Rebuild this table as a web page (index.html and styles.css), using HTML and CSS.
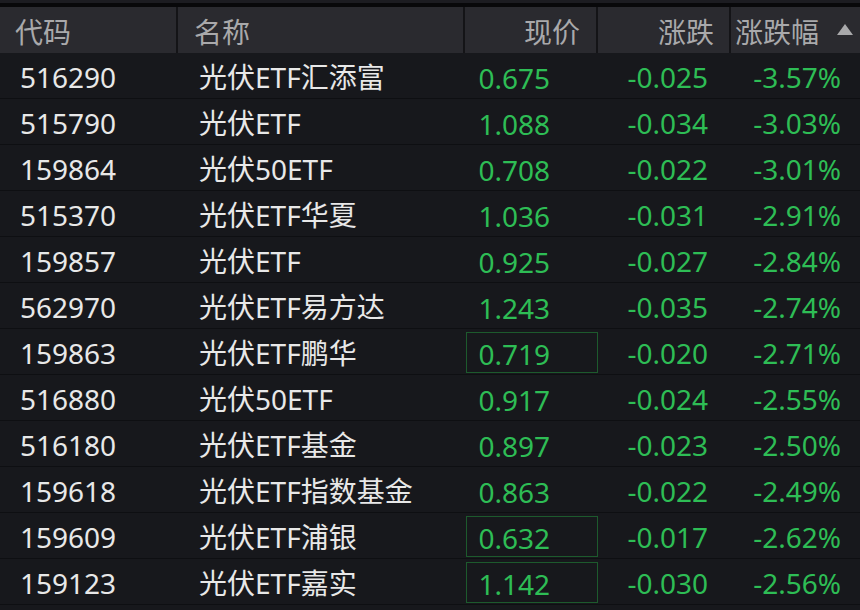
FILE: index.html
```html
<!DOCTYPE html>
<html lang="zh-CN">
<head>
<meta charset="utf-8">
<link rel="stylesheet" href="styles.css">
</head>
<body>
<div class="screen">
  <div class="topline"></div>
  <div class="table">
    <div class="row head">
      <div class="c code">代码</div>
      <div class="c name">名称</div>
      <div class="c price">现价</div>
      <div class="c chg">涨跌</div>
      <div class="c pct">涨跌幅<span class="tri"></span></div>
    </div>
    <div class="row"><div class="c code">516290</div><div class="c name">光伏ETF汇添富</div><div class="c price"><span>0.675</span></div><div class="c chg">-0.025</div><div class="c pct">-3.57%</div></div>
    <div class="row"><div class="c code">515790</div><div class="c name">光伏ETF</div><div class="c price"><span>1.088</span></div><div class="c chg">-0.034</div><div class="c pct">-3.03%</div></div>
    <div class="row"><div class="c code">159864</div><div class="c name">光伏50ETF</div><div class="c price"><span>0.708</span></div><div class="c chg">-0.022</div><div class="c pct">-3.01%</div></div>
    <div class="row"><div class="c code">515370</div><div class="c name">光伏ETF华夏</div><div class="c price"><span>1.036</span></div><div class="c chg">-0.031</div><div class="c pct">-2.91%</div></div>
    <div class="row"><div class="c code">159857</div><div class="c name">光伏ETF</div><div class="c price"><span>0.925</span></div><div class="c chg">-0.027</div><div class="c pct">-2.84%</div></div>
    <div class="row"><div class="c code">562970</div><div class="c name">光伏ETF易方达</div><div class="c price"><span>1.243</span></div><div class="c chg">-0.035</div><div class="c pct">-2.74%</div></div>
    <div class="row"><div class="c code">159863</div><div class="c name">光伏ETF鹏华</div><div class="c price"><span class="boxed">0.719</span></div><div class="c chg">-0.020</div><div class="c pct">-2.71%</div></div>
    <div class="row"><div class="c code">516880</div><div class="c name">光伏50ETF</div><div class="c price"><span>0.917</span></div><div class="c chg">-0.024</div><div class="c pct">-2.55%</div></div>
    <div class="row"><div class="c code">516180</div><div class="c name">光伏ETF基金</div><div class="c price"><span>0.897</span></div><div class="c chg">-0.023</div><div class="c pct">-2.50%</div></div>
    <div class="row"><div class="c code">159618</div><div class="c name">光伏ETF指数基金</div><div class="c price"><span>0.863</span></div><div class="c chg">-0.022</div><div class="c pct">-2.49%</div></div>
    <div class="row"><div class="c code">159609</div><div class="c name">光伏ETF浦银</div><div class="c price"><span class="boxed">0.632</span></div><div class="c chg">-0.017</div><div class="c pct">-2.62%</div></div>
    <div class="row"><div class="c code">159123</div><div class="c name">光伏ETF嘉实</div><div class="c price"><span class="boxed">1.142</span></div><div class="c chg">-0.030</div><div class="c pct">-2.56%</div></div>
  </div>
</div>
</body>
</html>
```
FILE: styles.css
```css
html, body {
  margin: 0;
  padding: 0;
  background: #17181c;
}
.screen {
  width: 860px;
  height: 610px;
  overflow: hidden;
  background: #17181c;
  font-family: "Noto Sans", "Noto Sans CJK SC", sans-serif;
  font-size: 28px;
}
.topline {
  height: 3px;
  background: #1c1c21;
  border-bottom: 4px solid #08080a;
}
.row {
  display: grid;
  grid-template-columns: 178px 287px 133px 133px 129px;
  height: 45px;
  border-bottom: 1px solid #0e0f12;
  color: #e8e8e8;
}
.row .c {
  display: flex;
  align-items: center;
  line-height: 1;
  white-space: nowrap;
  padding-top: 3px;
}
.row .code { padding-left: 20px; }
.row .name { padding-left: 21px; }
.row .price, .row .chg, .row .pct { color: #2ebd55; justify-content: flex-end; }
.row .price { padding-top: 0; }
.row .price span {
  box-sizing: border-box;
  width: 132px;
  height: 41px;
  display: flex;
  align-items: center;
  justify-content: flex-end;
  padding-right: 47px;
  padding-top: 4px;
  border: 1px solid transparent;
  margin-top: 1px;
}
.row .price span.boxed { border-color: #1d5a2d; }
.row .chg { padding-right: 23px; }
.row .pct { padding-right: 19px; }

.row.head {
  height: 46px;
  border-bottom: 0;
  background: #2a2a2f;
  color: #a9a9ab;
}
.row.head .c { border-right: 2px solid #141417; }
.row.head .pct { border-right: 0; justify-content: flex-start; padding-left: 4px; padding-right: 0; }
.row.head .code { padding-left: 15px; }
.row.head .name { padding-left: 16px; }
.row.head .price { padding-right: 16px; padding-top: 3px; color: #a9a9ab; }
.row.head .chg { padding-right: 15px; color: #a9a9ab; }
.row.head .pct { color: #a9a9ab; }
.tri {
  width: 0;
  height: 0;
  border-left: 8px solid transparent;
  border-right: 8px solid transparent;
  border-bottom: 11px solid #a9a9ab;
  margin-left: 18px;
  margin-top: -4px;
}
```
